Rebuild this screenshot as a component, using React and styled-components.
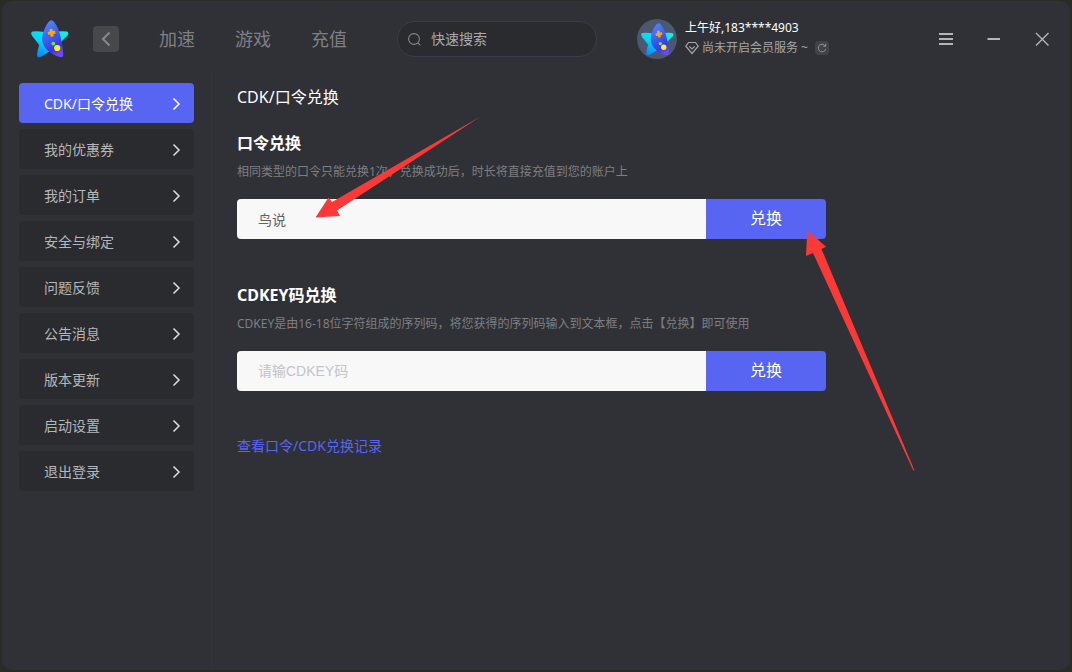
import React, { useId } from "react";
import styled, { createGlobalStyle } from "styled-components";

const sans = `"Noto Sans", "Noto Sans CJK SC", sans-serif`;

const GlobalStyle = createGlobalStyle`
  *, *::before, *::after { box-sizing: border-box; }
  body {
    margin: 0;
    background: #292b24;
    color: #fff;
    font-family: ${sans};
    font-size: 14px;
  }
  h1, h2, p, ul { margin: 0; padding: 0; }
  ul { list-style: none; }
  button, input { font-family: inherit; margin: 0; }
  button { cursor: pointer; border: 0; padding: 0; }
  svg { display: block; flex: none; }
`;

const Page = styled.div`
  min-height: 100vh;
  padding: 1px 2px 2px;
  display: flex;
`;

const Window = styled.div`
  flex: 1;
  display: flex;
  flex-direction: column;
  background: #303136;
  border-radius: 10px;
`;

const Header = styled.header`
  display: flex;
  align-items: center;
  height: 69px;
  padding: 7px 20px 0 29px;
`;

const BackButton = styled.button`
  display: grid;
  place-items: center;
  width: 26px;
  height: 26px;
  margin-left: 24px;
  border-radius: 4px;
  background: #47484c;
  color: #85868a;
`;

const Nav = styled.nav`
  display: flex;
  gap: 40px;
  margin-left: 40px;
`;

const NavLink = styled.a`
  color: #7f8084;
  font-size: 18px;
  line-height: 26px;
  text-decoration: none;
  white-space: nowrap;
`;

const Search = styled.label`
  display: flex;
  align-items: center;
  gap: 10px;
  width: 200px;
  height: 36px;
  margin-left: 50px;
  padding: 0 16px 0 10px;
  border: 1px solid #3b3c49;
  border-radius: 18px;
  background: #2a2b2e;
  color: #85868a;
`;

const SearchInput = styled.input`
  flex: 1;
  min-width: 0;
  padding: 0;
  border: 0;
  outline: 0;
  background: transparent;
  color: #fff;
  font-size: 14px;
  line-height: 20px;
  &::placeholder { color: #a9aaad; opacity: 1; }
`;

const Profile = styled.div`
  display: flex;
  align-items: center;
  gap: 8px;
  margin-left: 40px;
`;

const Avatar = styled.div`
  display: grid;
  place-items: center;
  width: 40px;
  height: 40px;
  border-radius: 50%;
  background: #4b5870;
`;

const ProfileText = styled.div`
  display: flex;
  flex-direction: column;
  padding-bottom: 2px;
  font-size: 12px;
  line-height: 20px;
  white-space: nowrap;
`;

const Membership = styled.div`
  display: flex;
  align-items: center;
  gap: 3px;
  color: #a5a6a9;
`;

const RefreshButton = styled.button`
  display: grid;
  place-items: center;
  width: 14px;
  height: 14px;
  margin-left: 4px;
  border-radius: 4px;
  background: #424347;
  color: #939498;
`;

const WindowControls = styled.div`
  display: flex;
  gap: 32px;
  margin-left: auto;
`;

const ControlButton = styled.button`
  display: grid;
  place-items: center;
  width: 16px;
  height: 16px;
  background: transparent;
  color: #b4b5b7;
`;

const Body = styled.div`
  flex: 1;
  display: flex;
`;

const Sidebar = styled.aside`
  flex: none;
  width: 210px;
  padding: 13px 17px;
  border-right: 1px solid #34353a;
`;

const Menu = styled.ul`
  display: flex;
  flex-direction: column;
  gap: 6px;
`;

const MenuItem = styled.a`
  display: flex;
  align-items: center;
  justify-content: space-between;
  height: 40px;
  padding: 2px 13px 0 25px;
  border-radius: 4px;
  background: ${(p) => (p.$active ? "#5865f2" : "#2a2b2e")};
  color: ${(p) => (p.$active ? "#fff" : "#b6b7b9")};
  font-size: 14px;
  line-height: 20px;
  text-decoration: none;
  svg { color: ${(p) => (p.$active ? "#fff" : "#dededf")}; }
`;

const Content = styled.main`
  position: relative;
  flex: 1;
  min-width: 0;
  padding: 15px 25px;
`;

const PageTitle = styled.h1`
  font-size: 16px;
  font-weight: 400;
  line-height: 24px;
`;

const RedeemForm = styled.form`
  max-width: 589px;
  margin-top: ${(p) => (p.$first ? 22 : 44)}px;
`;

const FormTitle = styled.h2`
  font-size: 16px;
  font-weight: 700;
  line-height: 24px;
`;

const Hint = styled.p`
  margin-top: 7px;
  color: #7e7f82;
  font-size: 12px;
  line-height: 20px;
`;

const Field = styled.div`
  display: flex;
  height: 40px;
  margin-top: 17px;
  border-radius: 4px;
  overflow: hidden;
`;

const CodeInput = styled.input`
  flex: 1;
  min-width: 0;
  padding: 0 21px;
  border: 0;
  outline: 0;
  background: #f8f8f8;
  color: #606266;
  font-family: "Liberation Sans", "Noto Sans CJK SC", sans-serif;
  font-size: 14px;
  &::placeholder { color: #c0c4cc; opacity: 1; }
`;

const SubmitButton = styled.button`
  flex: none;
  width: 120px;
  padding-bottom: 2px;
  background: #5865f2;
  color: #fff;
  font-size: 16px;
  line-height: 24px;
`;

const HistoryLink = styled.a`
  display: inline-block;
  margin-top: 45px;
  color: #5865f2;
  font-size: 14px;
  line-height: 20px;
  text-decoration: none;
`;

const Arrow = styled.svg`
  position: absolute;
  left: ${(p) => p.$left}px;
  top: ${(p) => p.$top}px;
  fill: #fd3938;
  pointer-events: none;
`;

function StarLogo({ size }) {
  const id = useId().replace(/[^a-zA-Z0-9]/g, "");
  return (
    <svg width={size} height={size} viewBox="0 0 38 38" aria-hidden="true">
      <defs>
        <linearGradient id={id + "a"} x1="0.8" y1="0" x2="0.2" y2="1">
          <stop offset="0" stopColor="#12f0e0" />
          <stop offset="0.5" stopColor="#08d4f8" />
          <stop offset="1" stopColor="#0880ff" />
        </linearGradient>
        <linearGradient id={id + "b"} x1="0.2" y1="0" x2="0.6" y2="1">
          <stop offset="0" stopColor="#5088ff" />
          <stop offset="0.5" stopColor="#3c59ec" />
          <stop offset="0.8" stopColor="#3c35e0" />
          <stop offset="1" stopColor="#6e48f8" />
        </linearGradient>
      </defs>
      <path
        d="M1.500 11.500Q7 10.800 13 12L26 11.500Q32 10.800 36 11.500Q38.500 13 36.500 15.500L30 22L20 30.500L10.500 36.500Q6 38.500 6 35Q6.500 30 8.200 25L1.200 16Q-1 12.500 1.500 11.500Z"
        fill={`url(#${id}a)`}
      />
      <path
        d="M17.500 2Q20.500-1.800 23.500 2.500Q27 7 29 14.500Q31.800 25 32.300 34.500Q32.300 38.300 28 36.800Q19.500 34 14.800 28.500Q10.500 23 11.200 17Q12.500 8.500 17.500 2Z"
        fill={`url(#${id}b)`}
      />
      <g transform="rotate(-10 20.500 12.700)" fill="#fda50b">
        <rect x="16.800" y="11.200" width="7.600" height="3.100" rx="0.500" />
        <rect x="19" y="8.800" width="3.100" height="7.900" rx="0.500" />
      </g>
      <circle cx="22.300" cy="23.700" r="1.900" fill="#75e61b" />
      <circle cx="26.200" cy="28" r="3.100" fill="#fbf316" />
    </svg>
  );
}

function Chevron() {
  return (
    <svg width="9" height="14" viewBox="0 0 9 14" fill="none" stroke="currentColor" strokeWidth="1.500">
      <path d="M1.500 1.500L7 7L1.500 12.500" />
    </svg>
  );
}

const menuItems = [
  "CDK/口令兑换",
  "我的优惠券",
  "我的订单",
  "安全与绑定",
  "问题反馈",
  "公告消息",
  "版本更新",
  "启动设置",
  "退出登录",
];

function CodeField({ id, ...inputProps }) {
  return (
    <Field>
      <CodeInput id={id} {...inputProps} />
      <SubmitButton type="submit">兑换</SubmitButton>
    </Field>
  );
}

export default function App() {
  const stay = (e) => e.preventDefault();
  return (
    <>
      <GlobalStyle />
      <Page>
        <Window>
          <Header>
            <StarLogo size={38} />
            <BackButton type="button" aria-label="返回">
              <svg width="12" height="16" viewBox="0 0 12 16" fill="none" stroke="currentColor" strokeWidth="2.200">
                <path d="M9.500 1.500L3 8L9.500 14.500" />
              </svg>
            </BackButton>
            <Nav>
              <NavLink href="#boost">加速</NavLink>
              <NavLink href="#games">游戏</NavLink>
              <NavLink href="#recharge">充值</NavLink>
            </Nav>
            <Search>
              <svg width="13" height="13" viewBox="0 0 13 13" fill="none" stroke="currentColor" strokeWidth="1.100">
                <circle cx="6" cy="6" r="5.400" />
                <path d="M9.800 9.800L12.400 12.400" />
              </svg>
              <SearchInput type="text" placeholder="快速搜索" aria-label="快速搜索" />
            </Search>
            <Profile>
              <Avatar>
                <StarLogo size={33} />
              </Avatar>
              <ProfileText>
                <div>上午好,183****4903</div>
                <Membership>
                  <svg width="14" height="14" viewBox="0 0 14 14" fill="none" stroke="currentColor" strokeWidth="1.200">
                    <path d="M3.500 1.500H10.500L13.200 5.200L7 12.500L0.800 5.200Z" />
                    <path d="M4.300 5.300L7 8L9.700 5.300" />
                  </svg>
                  <span>尚未开启会员服务 ~</span>
                  <RefreshButton type="button" aria-label="刷新">
                    <svg width="10" height="10" viewBox="0 0 10 10" fill="none" stroke="currentColor">
                      <path d="M8.300 3A3.800 3.800 0 1 0 8.700 6.200" />
                      <path d="M8.700 0.800V3.300H6.300" />
                    </svg>
                  </RefreshButton>
                </Membership>
              </ProfileText>
            </Profile>
            <WindowControls>
              <ControlButton type="button" aria-label="菜单">
                <svg width="16" height="16" viewBox="0 0 16 16" stroke="currentColor" strokeWidth="2">
                  <path d="M1 3H15M1 8H15M1 13H15" />
                </svg>
              </ControlButton>
              <ControlButton type="button" aria-label="最小化">
                <svg width="16" height="16" viewBox="0 0 16 16" stroke="currentColor" strokeWidth="2">
                  <path d="M1.500 8H14" />
                </svg>
              </ControlButton>
              <ControlButton type="button" aria-label="关闭">
                <svg width="16" height="16" viewBox="0 0 16 16" stroke="currentColor" strokeWidth="1.400">
                  <path d="M2 2L14.500 14.500M14.500 2L2 14.500" />
                </svg>
              </ControlButton>
            </WindowControls>
          </Header>
          <Body>
            <Sidebar>
              <Menu>
                {menuItems.map((label, i) => (
                  <li key={label}>
                    <MenuItem href={`#item-${i}`} $active={i === 0}>
                      {label}
                      <Chevron />
                    </MenuItem>
                  </li>
                ))}
              </Menu>
            </Sidebar>
            <Content>
              <PageTitle>CDK/口令兑换</PageTitle>
              <RedeemForm $first onSubmit={stay}>
                <FormTitle>
                  <label htmlFor="password-code">口令兑换</label>
                </FormTitle>
                <Hint>相同类型的口令只能兑换1次，兑换成功后，时长将直接充值到您的账户上</Hint>
                <CodeField id="password-code" type="text" defaultValue="鸟说" />
              </RedeemForm>
              <RedeemForm onSubmit={stay}>
                <FormTitle>
                  <label htmlFor="cdkey-code">CDKEY码兑换</label>
                </FormTitle>
                <Hint>CDKEY是由16-18位字符组成的序列码，将您获得的序列码输入到文本框，点击【兑换】即可使用</Hint>
                <CodeField id="cdkey-code" type="text" placeholder="请输CDKEY码" />
              </RedeemForm>
              <HistoryLink href="#history">查看口令/CDK兑换记录</HistoryLink>
              <Arrow $left={103} $top={46} width="168" height="104" viewBox="0 0 168 104" aria-hidden="true">
                <path d="M0.500 101.500L13.500 81.500L17 86L166 0.300L22 94.500L25 100Z" />
              </Arrow>
              <Arrow $left={593} $top={159} width="112" height="244" viewBox="0 0 112 244" aria-hidden="true">
                <path d="M2.300 1.300L21 17.800L16.500 20L109.500 241.500L108.300 241.500L8 24L1 27Z" />
              </Arrow>
            </Content>
          </Body>
        </Window>
      </Page>
    </>
  );
}
